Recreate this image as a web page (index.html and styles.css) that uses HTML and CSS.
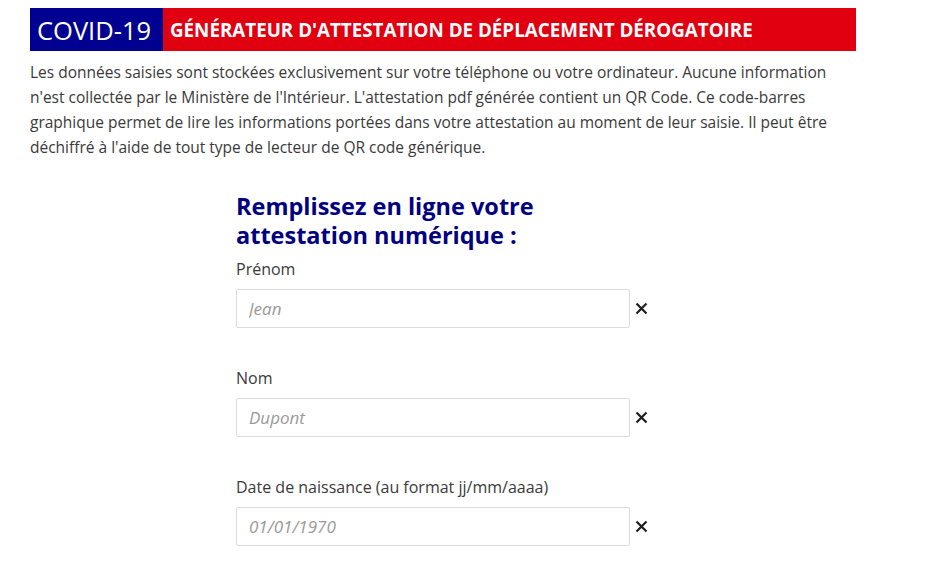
FILE: index.html
```html
<!DOCTYPE html>
<html lang="fr">
<head>
<meta charset="utf-8">
<title>Attestation de déplacement dérogatoire</title>
<link rel="stylesheet" href="styles.css">
</head>
<body>
<div class="page">
  <header class="banner">
    <div class="banner-covid">COVID-19</div>
    <h1 class="banner-title">Générateur d'attestation de déplacement dérogatoire</h1>
  </header>
  <p class="intro">Les données saisies sont stockées exclusivement sur votre téléphone ou votre ordinateur. Aucune information n'est collectée par le Ministère de l'Intérieur. L'attestation pdf générée contient un QR Code. Ce code-barres graphique permet de lire les informations portées dans votre attestation au moment de leur saisie. Il peut être déchiffré à l'aide de tout type de lecteur de QR code générique.</p>

  <form class="form">
    <h2 class="form-title">Remplissez en ligne votre<br>attestation numérique :</h2>

    <div class="field">
      <label class="label" for="firstname">Prénom</label>
      <div class="row">
        <input class="input" id="firstname" type="text" placeholder="Jean">
        <span class="clear"><svg viewBox="0 0 13 13" width="13" height="13"><path d="M1.5 1.5 L11.5 11.5 M11.5 1.5 L1.5 11.5" stroke="#1e1e1e" stroke-width="2.2" fill="none"/></svg></span>
      </div>
    </div>

    <div class="field">
      <label class="label" for="lastname">Nom</label>
      <div class="row">
        <input class="input" id="lastname" type="text" placeholder="Dupont">
        <span class="clear"><svg viewBox="0 0 13 13" width="13" height="13"><path d="M1.5 1.5 L11.5 11.5 M11.5 1.5 L1.5 11.5" stroke="#1e1e1e" stroke-width="2.2" fill="none"/></svg></span>
      </div>
    </div>

    <div class="field">
      <label class="label" for="birthday">Date de naissance (au format jj/mm/aaaa)</label>
      <div class="row">
        <input class="input" id="birthday" type="text" placeholder="01/01/1970">
        <span class="clear"><svg viewBox="0 0 13 13" width="13" height="13"><path d="M1.5 1.5 L11.5 11.5 M11.5 1.5 L1.5 11.5" stroke="#1e1e1e" stroke-width="2.2" fill="none"/></svg></span>
      </div>
    </div>
  </form>
</div>
</body>
</html>
```
FILE: styles.css
```css
html, body {
  margin: 0;
  padding: 0;
  background: #fff;
}

body {
  font-family: "Open Sans", "Noto Sans", sans-serif;
  color: #3a3a3a;
}

.page {
  width: 826px;
  margin: 8px 0 0 30px;
}

.banner {
  display: flex;
  align-items: stretch;
  height: 43px;
}

.banner-covid {
  background: #000091;
  color: #fff;
  width: 133px;
  box-sizing: border-box;
  padding-left: 7px;
  display: flex;
  align-items: center;
  font-size: 25.5px;
  letter-spacing: 0;
}

.banner-title {
  flex: 1;
  margin: 0;
  background: #e1000f;
  color: #fff;
  display: flex;
  align-items: center;
  padding-left: 7px;
  font-size: 18.8px;
  font-weight: 700;
  text-transform: uppercase;
  letter-spacing: 0;
}

.intro {
  margin: 9px 0 0 0;
  font-size: 15.5px;
  line-height: 25px;
  color: #3a3a3a;
}

.form {
  margin: 32px 0 0 206px;
  width: 420px;
}

.form-title {
  margin: 0;
  font-size: 23.5px;
  line-height: 29px;
  font-weight: 700;
  color: #000080;
}

.field {
  margin-top: 9px;
}

.field + .field {
  margin-top: 40px;
}

.label {
  display: block;
  font-size: 16px;
  line-height: 20px;
  color: #3a3a3a;
}

.row {
  display: flex;
  align-items: center;
  margin-top: 10px;
}

.input {
  width: 394px;
  height: 39px;
  box-sizing: border-box;
  border: 1px solid #dcdcdc;
  border-radius: 2px;
  padding: 0 12px;
  font-family: inherit;
  font-size: 17px;
  color: #333;
  background: #fff;
}

.input::placeholder {
  font-style: italic;
  color: #9a9a9a;
}

.clear {
  display: flex;
  margin-left: 5px;
  width: 13px;
  height: 13px;
}
```
